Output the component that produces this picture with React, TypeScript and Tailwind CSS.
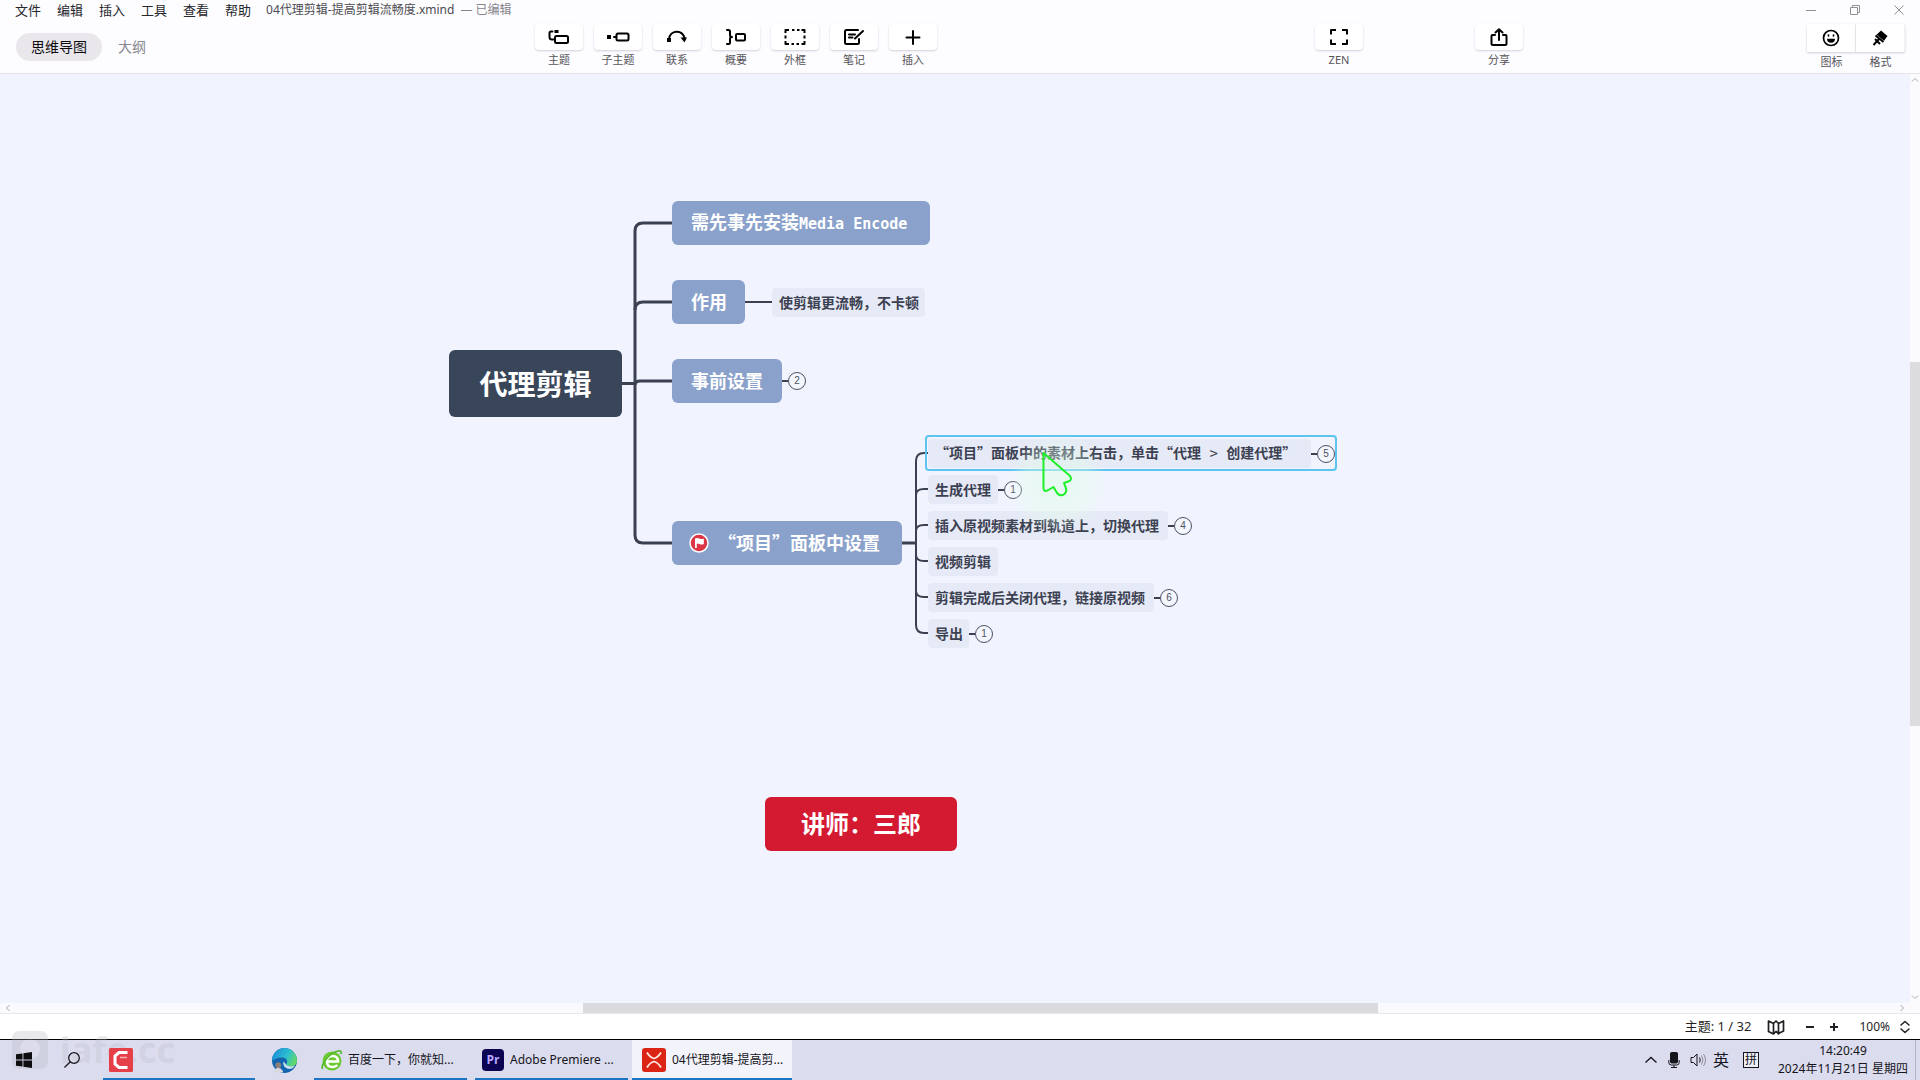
import type { ReactNode } from "react";

const MENUS = ["文件", "编辑", "插入", "工具", "查看", "帮助"];

const stroke = {
  fill: "none",
  stroke: "currentColor",
  strokeWidth: 2,
  strokeLinecap: "round" as const,
  strokeLinejoin: "round" as const,
};

const TopicIcon = () => (
  <svg width="22" height="18" viewBox="0 0 22 18" {...stroke}>
    <path d="M4.500 3.500H3a1.500 1.500 0 0 0-1.500 1.500v4A2.500 2.500 0 0 0 4 11.500h1.500" />
    <rect x="7" y="8" width="13" height="7" rx="1.500" />
    <rect x="6.500" y="2" width="4" height="3" fill="currentColor" stroke="none" />
  </svg>
);

const SubtopicIcon = () => (
  <svg width="24" height="18" viewBox="0 0 24 18" {...stroke}>
    <rect x="1" y="7" width="4" height="4" fill="currentColor" stroke="none" />
    <path d="M8 9h2" />
    <rect x="10.500" y="5.500" width="12" height="7" rx="1.500" />
  </svg>
);

const RelationIcon = () => (
  <svg width="22" height="18" viewBox="0 0 22 18" {...stroke}>
    <path d="M3 11c1-9 13-10 15.500-1" />
    <rect x="1" y="10" width="4" height="4" fill="currentColor" stroke="none" />
    <path d="M14.500 9.500h6.500l-2.500 5z" fill="currentColor" stroke="none" />
  </svg>
);

const SummaryIcon = () => (
  <svg width="22" height="18" viewBox="0 0 22 18" {...stroke}>
    <path d="M2 2h1.500q1.500 0 1.500 1.500v3.500q0 2 2 2q-2 0-2 2v3.500q0 1.500-1.500 1.500H2" />
    <rect x="11" y="6" width="9" height="6.500" rx="1" />
  </svg>
);

const BoundaryIcon = () => (
  <svg width="22" height="18" viewBox="0 0 22 18" {...stroke} strokeLinecap="butt">
    <path d="M1.500 5V2H5M8 2h2.500M13 2h2.500M17.500 2h3v3M20.500 7.500v3M20.500 13v3h-3M15 16h-2.500M10 16H7.500M5 16H1.500v-3M1.500 10.500v-3" />
  </svg>
);

const NoteIcon = () => (
  <svg width="22" height="18" viewBox="0 0 22 18" {...stroke}>
    <path d="M15 2H3.500Q2 2 2 3.500v11Q2 16 3.500 16h11q1.500 0 1.500-1.500V11M6 6.500h6M6 9.500h3.500M12 10.500l8-7.500" />
  </svg>
);

const PlusIcon = () => (
  <svg width="18" height="18" viewBox="0 0 18 18" {...stroke}>
    <path d="M9 3v13M2.500 9.500h13" />
  </svg>
);

const ZenIcon = () => (
  <svg width="20" height="18" viewBox="0 0 20 18" {...stroke} strokeLinecap="butt">
    <path d="M2 6.500V2h5M13 2h5v4.500M18 11.500V16h-5M7 16H2v-4.500" />
  </svg>
);

const ShareIcon = () => (
  <svg width="20" height="18" viewBox="0 0 20 18" {...stroke}>
    <path d="M6 7H3.500Q2.500 7 2.500 8v7.500q0 1.500 1.500 1.500h12q1.500 0 1.500-1.500V8q0-1-1-1H14M10 12V1.500M6.500 4.500L10 1.200l3.500 3.300" />
  </svg>
);

const FaceIcon = () => (
  <svg width="18" height="18" viewBox="0 0 18 18" {...stroke} strokeWidth="1.700">
    <circle cx="9" cy="9" r="7.500" />
    <path d="M6.500 6.200v.6M11.500 6.200v.6" />
    <path d="M5 9.800h8a4 4 0 0 1-8 0z" fill="currentColor" stroke="none" />
  </svg>
);

const BrushIcon = () => (
  <svg width="18" height="18" viewBox="0 0 18 18">
    <path d="M10 1.500l6.500 5.500-3.500 4.800L5.500 5.800z" fill="currentColor" />
    <path d="M4.500 6.500l8 6.500M8 10l-5.500 6M4 10l5 5" stroke="currentColor" strokeWidth="2" fill="none" />
  </svg>
);

function Tool({ icon, label }: { icon: ReactNode; label: string }) {
  return (
    <button className="flex w-12 flex-col items-center">
      <span className="flex h-[26px] w-full items-center justify-center rounded-sm bg-white text-black shadow-[0_1px_2px_rgba(60,50,90,0.22)]">
        {icon}
      </span>
      <span className="mt-0.5 text-[11px] leading-4 whitespace-nowrap text-[#55555a]">{label}</span>
    </button>
  );
}

function SideTool({ icon, label }: { icon: ReactNode; label: string }) {
  return (
    <button className="flex w-[49px] flex-col items-center">
      <span className="flex h-7 w-full items-center justify-center border-r border-[#f3f1f6] bg-white text-black shadow-[0_1px_2px_rgba(60,50,90,0.22)]">
        {icon}
      </span>
      <span className="mt-0.5 text-[11px] leading-4 text-[#55555a]">{label}</span>
    </button>
  );
}

function Header() {
  return (
    <header className="h-[74px] shrink-0 border-b border-[#e6e3ec] bg-[#fdfcff]">
      <div className="flex h-5 items-center justify-between">
        <nav className="flex items-center gap-4 pl-[15px] text-[13px] leading-5 text-[#26262b]">
          {MENUS.map((m) => (
            <button key={m}>{m}</button>
          ))}
          <span className="-ml-px flex gap-[6px] text-xs leading-5 text-[#4c4c52]">
            <span>04代理剪辑-提高剪辑流畅度.xmind</span>
            <span className="text-[#85858b]">— 已编辑</span>
          </span>
        </nav>
        <div className="flex items-center gap-8 pr-[15px] text-[#909096]">
          <button aria-label="最小化">
            <svg width="12" height="12" viewBox="0 0 12 12" stroke="currentColor"><path d="M1 6.500h10" /></svg>
          </button>
          <button aria-label="还原">
            <svg width="12" height="12" viewBox="0 0 12 12" stroke="currentColor" fill="none">
              <path d="M1.500 3.500h7v7h-7zM3.500 3.500v-2h7v7h-2" />
            </svg>
          </button>
          <button aria-label="关闭">
            <svg width="12" height="12" viewBox="0 0 12 12" stroke="currentColor"><path d="M1.500 1.500l9 9M10.500 1.500l-9 9" /></svg>
          </button>
        </div>
      </div>
      <div className="flex items-start pt-1 pr-[15px]">
        <div className="flex w-[535px] items-center gap-4 pt-[9px] pl-4 text-sm">
          <button className="h-7 rounded-full bg-[#e9e7eb] px-[15px] text-[#0c0c0e]">思维导图</button>
          <button className="text-[#8a8a90]">大纲</button>
        </div>
        <div className="flex gap-[11px]">
          <Tool icon={<TopicIcon />} label="主题" />
          <Tool icon={<SubtopicIcon />} label="子主题" />
          <Tool icon={<RelationIcon />} label="联系" />
          <Tool icon={<SummaryIcon />} label="概要" />
          <Tool icon={<BoundaryIcon />} label="外框" />
          <Tool icon={<NoteIcon />} label="笔记" />
          <Tool icon={<PlusIcon />} label="插入" />
        </div>
        <div className="ml-[378px] flex gap-28">
          <Tool icon={<ZenIcon />} label="ZEN" />
          <Tool icon={<ShareIcon />} label="分享" />
        </div>
        <div className="ml-auto flex">
          <SideTool icon={<FaceIcon />} label="图标" />
          <SideTool icon={<BrushIcon />} label="格式" />
        </div>
      </div>
    </header>
  );
}

function Branch({ place, children }: { place: string; children: ReactNode }) {
  return (
    <div
      className={`absolute flex h-11 items-center rounded-md bg-[#8aa1cb] pb-0.5 pl-[19px] text-lg font-bold whitespace-nowrap text-white ${place}`}
    >
      {children}
    </div>
  );
}

interface LeafProps {
  id: string;
  place: string;
  size: string;
  text: ReactNode;
  count?: number;
}

function Leaf({ place, size, text, count }: Omit<LeafProps, "id">) {
  return (
    <div className={`absolute flex items-center ${place}`}>
      <div
        className={`flex h-[29px] items-center rounded-sm bg-[#e6eaf6] pb-0.5 pl-[7px] text-sm font-bold whitespace-nowrap text-[#3c4152] ${size}`}
      >
        <span>{text}</span>
      </div>
      {count !== undefined && <Count value={count} />}
    </div>
  );
}

function Count({ value }: { value: number }) {
  return (
    <>
      <span className="h-0.5 w-1.5 bg-[#3c4152]" />
      <button className="flex size-[18px] items-center justify-center rounded-full border border-[#4c5162] bg-[#f4f6fe] font-['Liberation_Sans',sans-serif] text-[10px] leading-none text-[#4c5162]">
        {value}
      </button>
    </>
  );
}

const LEAVES: LeafProps[] = [
  {
    id: "create",
    place: "left-[928px] top-[365px]",
    size: "w-[383px]",
    text: (
      <>
        “项目”面板中的素材上右击，单击“代理
        <span className="font-['DejaVu_Sans_Mono',monospace] font-normal whitespace-pre">{" > "}</span>
        创建代理”
      </>
    ),
    count: 5,
  },
  { id: "build", place: "left-[928px] top-[401px]", size: "w-[70px]", text: "生成代理", count: 1 },
  { id: "insert", place: "left-[928px] top-[437px]", size: "w-[240px]", text: "插入原视频素材到轨道上，切换代理", count: 4 },
  { id: "edit", place: "left-[928px] top-[473px]", size: "w-[70px]", text: "视频剪辑" },
  { id: "relink", place: "left-[928px] top-[509px]", size: "w-[226px]", text: "剪辑完成后关闭代理，链接原视频", count: 6 },
  { id: "export", place: "left-[928px] top-[545px]", size: "w-[41px]", text: "导出", count: 1 },
];

function MindMap() {
  return (
    <main className="relative min-h-0 flex-1 overflow-hidden bg-[#f1f4fe] font-['Noto_Sans_CJK_SC',sans-serif]">
      <svg className="absolute top-0 left-0" width="1340" height="700" fill="none" stroke="#3c4152">
        <g strokeWidth="3">
          <path d="M622 309.500H636" />
          <path d="M672 149H643q-8 0-8 8V461q0 8 8 8H672" />
          <path d="M672 228H643q-8 0-8 8M672 307H640q-5 0-5 4" />
        </g>
        <g strokeWidth="2">
          <path d="M745 228H772" />
          <path d="M902 469H915" strokeWidth="3" />
          <path d="M929 379H924q-8 0-8 8V551q0 8 8 8H929" />
          <path d="M929 415H924q-8 0-8 6M929 451H924q-8 0-8 6M929 487H924q-8 0-8-6M929 523H924q-8 0-8-6" />
        </g>
      </svg>

      <div className="absolute top-[276px] left-[449px] flex h-[67px] w-[173px] items-center justify-center rounded-md bg-[#39465a] pb-0.5 text-[28px] font-bold text-white">
        代理剪辑
      </div>

      <Branch place="left-[672px] top-[127px] w-[258px]">
        <span>
          需先事先安装<span className="font-['DejaVu_Sans_Mono',monospace] text-[15px]">Media Encode</span>
        </span>
      </Branch>
      <Branch place="left-[672px] top-[206px] w-[73px]">作用</Branch>
      <Branch place="left-[672px] top-[285px] w-[110px]">事前设置</Branch>
      <div className="absolute top-[298px] left-[782px] flex items-center">
        <Count value={2} />
      </div>
      <Branch place="left-[672px] top-[447px] w-[230px]">
        <svg className="mt-0.5 -ml-[2px] mr-[9px]" width="20" height="20" viewBox="0 0 20 20">
          <circle cx="10" cy="10" r="9" fill="#dc3545" stroke="#fff" strokeWidth="1.500" />
          <path d="M6 15V5.500q2.200-1 4.400 0t4.400 0V11q-2.200 1-4.400 0T7.800 11v4z" fill="#fff" />
        </svg>
        “项目”面板中设置
      </Branch>

      <Leaf place="left-[772px] top-[214px]" size="w-[153px]" text="使剪辑更流畅，不卡顿" />
      {LEAVES.map(({ id, ...leaf }) => (
        <Leaf key={id} {...leaf} />
      ))}
      <div className="pointer-events-none absolute top-[361px] left-[925px] h-9 w-[412px] rounded border-2 border-[#5cc4ee]" />

      <div className="absolute top-[723px] left-[765px] flex h-[54px] w-[192px] items-center justify-center rounded-md bg-[#d41a31] pb-0.5 text-2xl font-bold text-white">
        讲师：三郎
      </div>

      <div className="pointer-events-none absolute top-[359px] left-[1007px] size-[100px] rounded-full bg-[radial-gradient(circle,rgba(215,255,225,0.4)_0%,rgba(225,255,232,0.35)_45%,rgba(235,255,240,0)_70%)]" />
      <svg className="pointer-events-none absolute top-[376px] left-[1040px]" width="36" height="50" viewBox="0 0 36 50">
        <path
          d="M3.500 3v35q0 4 4 2.500l6-3.500 3.500 6q3.500 4 7.500 1 3-3 1-7l-1.500-4 5.500-2q3-2 0-5.500z"
          fill="rgba(235,255,240,0.2)"
          stroke="#1cf028"
          strokeWidth="2"
          strokeLinejoin="round"
        />
      </svg>
    </main>
  );
}

const arrow = { fill: "none", stroke: "#a9a9b0", strokeWidth: 1 };

function Workspace() {
  return (
    <div className="flex min-h-0 flex-1">
      <div className="flex min-w-0 flex-1 flex-col">
        <MindMap />
        <div className="flex h-[10px] shrink-0 items-center bg-[#fafafe]">
          <svg className="ml-1" width="8" height="8" viewBox="0 0 8 8" {...arrow}><path d="M5.500 1l-3 3 3 3" /></svg>
          <div className="ml-[571px] h-full w-[795px] bg-[#dadadf]" />
          <svg className="mr-1 ml-auto" width="8" height="8" viewBox="0 0 8 8" {...arrow}><path d="M2.500 1l3 3-3 3" /></svg>
        </div>
      </div>
      <div className="flex w-[10px] shrink-0 flex-col items-center bg-[#fbfbfe]">
        <svg className="mt-[2px]" width="8" height="8" viewBox="0 0 8 8" {...arrow}><path d="M1 5.500l3-3 3 3" /></svg>
        <div className="mt-[278px] h-[364px] w-full bg-[#dcdcdf]" />
        <svg className="mt-auto mb-3" width="8" height="8" viewBox="0 0 8 8" {...arrow}><path d="M1 2.500l3 3 3-3" /></svg>
      </div>
    </div>
  );
}

function StatusBar() {
  return (
    <div className="flex h-[27px] shrink-0 items-center justify-end border-t border-b border-t-[#e9e7ee] border-b-black bg-white pr-2 text-[13px] text-[#1f1f24]">
      <span>主题: 1 / 32</span>
      <button aria-label="导航图" className="ml-4">
        <svg width="18" height="16" viewBox="0 0 18 16" {...stroke} strokeWidth="1.700">
          <path d="M1.500 2l5 2.500L9 2l2.500 2.500 5-2.500v10l-5 2.500L9 12.500 6.500 15l-5-2.500zM6.500 4.500V15M11.500 4.500V15" />
        </svg>
      </button>
      <button aria-label="缩小" className="ml-[19px]">
        <svg width="12" height="12" viewBox="0 0 12 12" stroke="currentColor" strokeWidth="2"><path d="M2 6h8" /></svg>
      </button>
      <button aria-label="放大" className="ml-3">
        <svg width="12" height="12" viewBox="0 0 12 12" stroke="currentColor" strokeWidth="2"><path d="M2 6h8M6 2v8" /></svg>
      </button>
      <button className="ml-[19px] flex items-center gap-2 text-xs">
        100%
        <svg width="14" height="14" viewBox="0 0 14 14" {...stroke} strokeWidth="1.500"><path d="M3 5l4-3.500L11 5M3 9l4 3.500L11 9" /></svg>
      </button>
    </div>
  );
}

const WindowsLogo = () => (
  <svg width="16" height="16" viewBox="0 0 16 16" fill="#0d0d10">
    <path d="M0 2.300l6.500-.9v6.100H0zM7.400 1.300L16 0v7.500H7.400zM0 8.400h6.500v6.200L0 13.700zM7.400 8.400H16V16l-8.600-1.300z" />
  </svg>
);

const CamtasiaLogo = () => (
  <svg width="24" height="24" viewBox="0 0 24 24">
    <rect width="24" height="24" rx="1.500" fill="#e5404a" />
    <path d="M18.500 4.500H10L6 8v8l4 3.500h8.500" fill="none" stroke="#fff" strokeWidth="3" />
    <path d="M11 9.500h7" fill="none" stroke="#f6b0b0" strokeWidth="1.500" />
  </svg>
);

const EdgeLogo = () => (
  <svg width="25" height="25" viewBox="0 0 24 24">
    <defs>
      <linearGradient id="edgeTop" x1="0" y1="0.300" x2="1" y2="0.700">
        <stop offset="0" stopColor="#1c8fd6" />
        <stop offset="0.550" stopColor="#2bbfd0" />
        <stop offset="1" stopColor="#6bdc5c" />
      </linearGradient>
    </defs>
    <circle cx="12" cy="12" r="12" fill="#1464b0" />
    <path d="M0 12a12 12 0 0 1 24 0c0 4-3 6-6.500 6-3 0-4.500-1.500-3.500-3 1.500-2.500 0-6-4.500-6C5 9 1.500 11 0 12z" fill="url(#edgeTop)" />
    <path d="M11 13c-1 4 2 7.500 7 7 2-.5 3-1.500 4-3-4 1.500-8 .5-9-2z" fill="#c9dff2" />
    <circle cx="6" cy="16.500" r="2.800" fill="#8c7f7a" />
    <path d="M1.500 22q4.500-6 9 0v1.500H3.500z" fill="#d8d8de" />
  </svg>
);

const GreenBrowserLogo = () => (
  <svg width="21" height="23" viewBox="0 0 21 23">
    <circle cx="11" cy="12" r="9.500" fill="#6cc932" />
    <path d="M6 12.500h11q0-5.500-5.500-5.500T6 12.500t5.500 5.500q3 0 4.800-2" fill="none" stroke="#fff" strokeWidth="2.600" />
    <path d="M1.500 20C-.5 16 8 4 17 2q4-.8 3 3" fill="none" stroke="#55b82a" strokeWidth="1.600" />
  </svg>
);

const PremiereLogo = () => (
  <span className="flex size-[22px] items-center justify-center rounded bg-[#0c0452] font-['Open_Sans',sans-serif] text-xs leading-none font-bold text-[#b9a8ff]">
    Pr
  </span>
);

const XmindLogo = () => (
  <svg width="24" height="24" viewBox="0 0 24 24">
    <rect width="24" height="24" rx="3" fill="#dc2415" />
    <path d="M5 4.500q3 5 7 6 4-1 7-6M5 19.500q3-5 7-6 4 1 7 6" fill="none" stroke="#ffe9e2" strokeWidth="1.800" />
  </svg>
);

function Task({ size, icon, label, active }: { size: string; icon: ReactNode; label?: string; active?: boolean }) {
  return (
    <button
      aria-label={label ?? "Camtasia"}
      className={`flex h-full items-center gap-[6px] border-b-2 border-[#1b74c4] pt-0.5 text-xs whitespace-nowrap text-[#15151c] ${size} ${active ? "bg-[#f3f3fb]" : ""}`}
    >
      {icon}
      {label}
    </button>
  );
}

function Taskbar() {
  return (
    <footer className="relative flex h-10 shrink-0 items-center bg-[#dbdcee]">
      <div className="pointer-events-none absolute -top-[10px] left-3 flex items-center gap-3 opacity-30">
        <svg width="36" height="38" viewBox="0 0 36 38">
          <rect width="36" height="38" rx="7" fill="#b9b9c2" />
          <circle cx="18" cy="18" r="10" fill="#dfdfe8" />
        </svg>
        <span className="text-[36px] leading-10 font-bold text-[#bfbfc8]">iafe.cc</span>
      </div>
      <button aria-label="开始" className="relative ml-4">
        <WindowsLogo />
      </button>
      <button aria-label="搜索" className="relative ml-8">
        <svg width="16" height="16" viewBox="0 0 16 16" fill="none" stroke="#17171c" strokeWidth="1.300">
          <circle cx="10" cy="6" r="5.300" />
          <path d="M6.300 9.700L.5 15.500" />
        </svg>
      </button>
      <div className="relative ml-[23px] flex h-full items-center">
        <Task size="w-[152px] pl-1.5" icon={<CamtasiaLogo />} />
        <button aria-label="Edge" className="mx-[17px]">
          <EdgeLogo />
        </button>
        <Task size="w-[153px] pl-[7px]" icon={<GreenBrowserLogo />} label="百度一下，你就知..." />
        <Task size="ml-2 w-[153px] pl-[7px]" icon={<PremiereLogo />} label="Adobe Premiere ..." />
        <Task size="ml-1 w-[160px] pl-[10px]" icon={<XmindLogo />} label="04代理剪辑-提高剪..." active />
      </div>
      <div className="ml-auto flex h-full items-center text-[#15151c]">
        <svg width="12" height="8" viewBox="0 0 12 8" fill="none" stroke="currentColor" strokeWidth="1.300"><path d="M.5 6.500L6 1.500l5.500 5" /></svg>
        <svg className="ml-[11px]" width="12" height="16" viewBox="0 0 12 16" fill="none" stroke="currentColor">
          <rect x="2.500" y="0.500" width="7" height="10.500" rx="1" fill="currentColor" />
          <path d="M.8 8v2.500q0 2.500 2.500 2.500h5.400q2.500 0 2.500-2.500V8M6 13v2.500M3 15.500h6" />
        </svg>
        <svg className="ml-[10px]" width="17" height="14" viewBox="0 0 17 14" fill="none" stroke="currentColor">
          <path d="M1 4.500h2.500L7 1v12L3.500 9.500H1z" />
          <path d="M9.500 4.500q1.500 2.500 0 5" />
          <path d="M11.500 2.500q3 4.500 0 9M13.500 1q4 6 0 12" stroke="#8b8b98" />
        </svg>
        <span className="ml-[6px] text-base">英</span>
        <span className="ml-[14px] flex size-4 items-center justify-center border border-[#15151c] bg-[#eeeef6] text-xs leading-none">拼</span>
        <div className="ml-[19px] flex flex-col items-center text-xs leading-[18px]">
          <span>14:20:49</span>
          <span>2024年11月21日 星期四</span>
        </div>
        <div className="mr-1 ml-[7px] h-full w-px bg-[#b4b5c8]" />
      </div>
    </footer>
  );
}

export default function App() {
  return (
    <div className="flex h-screen flex-col overflow-hidden bg-white font-['Noto_Sans','Noto_Sans_CJK_SC',sans-serif]">
      <Header />
      <Workspace />
      <StatusBar />
      <Taskbar />
    </div>
  );
}
